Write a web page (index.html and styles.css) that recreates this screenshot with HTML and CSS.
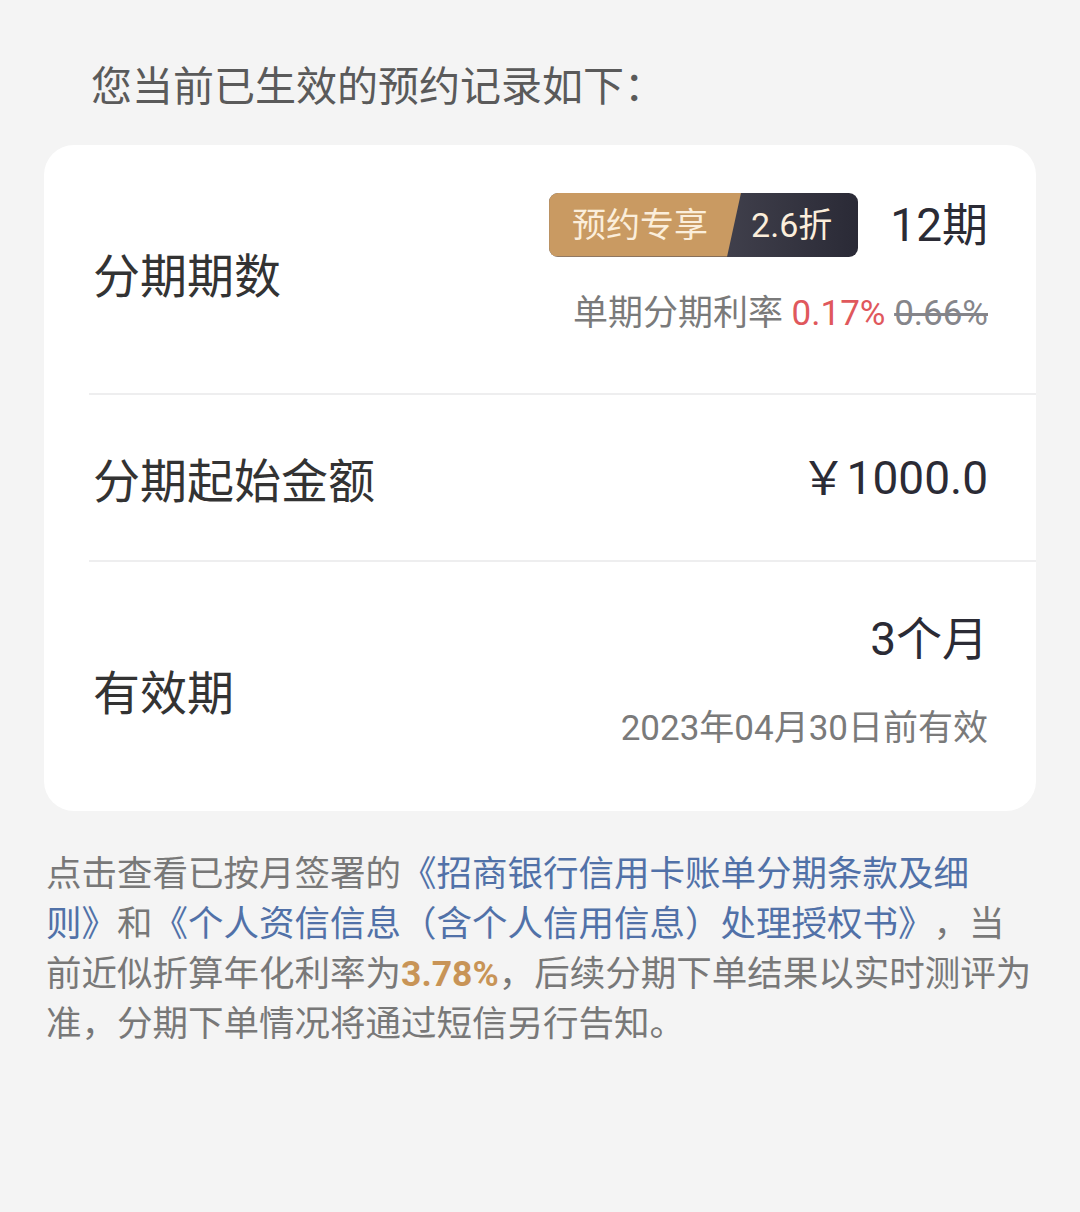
FILE: index.html
```html
<!DOCTYPE html>
<html lang="zh-CN">
<head>
  <meta charset="UTF-8">
  <meta name="viewport" content="width=device-width, initial-scale=1.0">
  <title>预约记录</title>
  <link rel="stylesheet" href="styles.css">
</head>
<body>

<div class="page-title">您当前已生效的预约记录如下：</div>

<div class="record-card">
  <div class="record-row row-term">
    <div class="row-label">分期期数</div>
    <div class="row-value">
      <div class="term-line">
        <div class="badge">
          <span class="badge-tag">预约专享</span>
          <span class="badge-discount">2.6折</span>
        </div>
        <span class="main-value">12期</span>
      </div>
      <div class="sub-value">单期分期利率 <span class="rate-now">0.17%</span> <span class="rate-old">0.66%</span></div>
    </div>
  </div>

  <div class="record-row row-amount">
    <div class="row-label">分期起始金额</div>
    <div class="row-value">
      <span class="main-value">￥1000.0</span>
    </div>
  </div>

  <div class="record-row row-valid">
    <div class="row-label">有效期</div>
    <div class="row-value">
      <span class="main-value">3个月</span>
      <div class="sub-value date-line">2023年04月30日前有效</div>
    </div>
  </div>
</div>

<p class="notice">点击查看已按月签署的<a class="doc-link" href="#">《招商银行信用卡账单分期条款及细<br>则》</a>和<a class="doc-link" href="#">《个人资信信息（含个人信用信息）处理授权书》</a>，当<br>前近似折算年化利率为<b class="apr">3.78%</b>，后续分期下单结果以实时测评为<br>准，分期下单情况将通过短信另行告知。</p>

</body>
</html>
```

FILE: styles.css
```css
body {
  margin: 0;
  padding: 0;
  background-color: #f4f4f4;
  font-family: Roboto, "Noto Sans CJK SC", sans-serif;
  color: #333;
  text-spacing-trim: space-all;
}

.page-title {
  padding: 59px 0 0 91px;
  height: 145px;
  box-sizing: border-box;
  font-size: 41px;
  line-height: 56px;
  color: #5a5a5a;
}

.record-card {
  margin: 0 44px;
  background-color: #fff;
  border-radius: 30px;
  overflow: hidden;
}

.record-row {
  display: flex;
  justify-content: space-between;
  align-items: center;
  margin-left: 45px;
  padding: 0 48px 0 4px;
  border-bottom: 2px solid #eeeeef;
}

.record-row:last-child {
  border-bottom: none;
}

.row-term {
  height: 248px;
}

.row-amount {
  height: 165px;
}

.row-valid {
  height: 249px;
}

.row-label {
  font-size: 47px;
  color: #333;
}

.row-term .row-label {
  margin-top: 6px;
}

.row-valid .row-label {
  margin-top: 6px;
}

.row-value {
  display: flex;
  flex-direction: column;
  align-items: flex-end;
}

.term-line {
  display: flex;
  align-items: center;
  gap: 32px;
  margin-top: -8px;
}

.main-value {
  font-size: 46px;
  line-height: 60px;
  color: #2b2b35;
}

.badge {
  display: flex;
  height: 64px;
  border-radius: 9px;
  overflow: hidden;
  background: linear-gradient(90deg, #5d5c68, #2a2a36);
  font-size: 34px;
  line-height: 64px;
  color: #fbeedb;
}

.badge-tag {
  padding: 0 33px 0 23px;
  background-color: #c99a62;
  clip-path: polygon(0 0, 100% 0, calc(100% - 14px) 100%, 0 100%);
}

.badge-discount {
  padding: 0 26px 0 10px;
}

.sub-value {
  font-size: 35px;
  line-height: 48px;
  color: #7a7a7a;
  margin-top: 33px;
}

.rate-now {
  color: #e0585c;
}

.rate-old {
  color: #85858a;
  text-decoration: line-through;
}

.date-line {
  margin-top: 36px;
}

.row-valid .row-value {
  margin-top: -12px;
}

.notice {
  margin: 38px 30px 0 46px;
  font-size: 35.5px;
  line-height: 50px;
  color: #787878;
}

.doc-link {
  color: #5171a8;
  text-decoration: none;
}

.apr {
  color: #c89457;
  font-weight: bold;
}
```
